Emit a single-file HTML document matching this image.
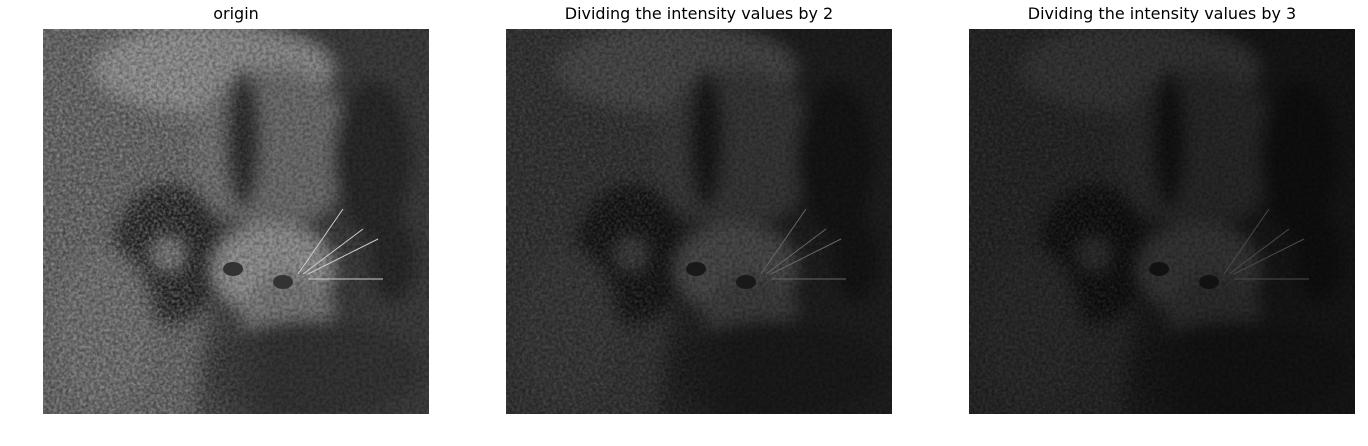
<!DOCTYPE html>
<html><head><meta charset="utf-8"><style>
html,body{margin:0;padding:0;background:#fff;width:1368px;height:446px;overflow:hidden}
.t{position:absolute;top:4px;font:16px "DejaVu Sans","Liberation Sans",sans-serif;color:#000;text-align:center;width:386px}
svg{position:absolute;top:29px}
</style></head><body>
<div class="t" style="left:43px">origin</div>
<div class="t" style="left:506px">Dividing the intensity values by 2</div>
<div class="t" style="left:969px">Dividing the intensity values by 3</div>
<svg width="0" height="0" style="position:absolute">
<defs>
<filter id="bl" x="-20%" y="-20%" width="140%" height="140%"><feGaussianBlur stdDeviation="8"/></filter>
<filter id="nz" x="0" y="0" width="100%" height="100%"><feTurbulence type="fractalNoise" baseFrequency="0.35" numOctaves="2" seed="3"/><feColorMatrix type="matrix" values="0 0 0 0 0.5  0 0 0 0 0.5  0 0 0 0 0.5  0 0 0 1.6 -0.5"/></filter>
<filter id="nz2" x="0" y="0" width="100%" height="100%"><feTurbulence type="fractalNoise" baseFrequency="0.3" numOctaves="2" seed="7"/><feColorMatrix type="matrix" values="0 0 0 0 0  0 0 0 0 0  0 0 0 0 0  0 0 0 1.8 -0.6"/></filter>
<linearGradient id="lg" x1="0" x2="1" y1="0" y2="0"><stop offset="0" stop-color="#fff"/><stop offset="0.35" stop-color="#fff"/><stop offset="0.6" stop-color="#000"/></linearGradient>
<mask id="mk"><rect width="386" height="385" fill="url(#lg)"/></mask>
<clipPath id="cp"><rect width="386" height="385"/></clipPath>
<g id="img" clip-path="url(#cp)">
<rect width="386" height="385" fill="#5e5e5e"/>
<g filter="url(#bl)">
<path d="M210 -20 L400 -20 L400 400 L150 400 L170 250 Z" fill="#3e3e3e"/>
<ellipse cx="170" cy="40" rx="120" ry="45" fill="#8a8a8a"/>
<ellipse cx="230" cy="120" rx="80" ry="80" fill="#6e6e6e"/>
<ellipse cx="200" cy="110" rx="18" ry="70" fill="#2a2a2a"/>
<ellipse cx="330" cy="130" rx="40" ry="80" fill="#2c2c2c"/>
<ellipse cx="125" cy="225" rx="55" ry="70" fill="#222"/>
<ellipse cx="125" cy="225" rx="15" ry="15" fill="#777"/>
<ellipse cx="230" cy="240" rx="60" ry="45" fill="#909090"/>
<ellipse cx="245" cy="285" rx="45" ry="40" fill="#7a7a7a"/>
<ellipse cx="270" cy="340" rx="110" ry="50" fill="#343434"/>
<ellipse cx="350" cy="230" rx="25" ry="45" fill="#2c2c2c"/>
<ellipse cx="60" cy="300" rx="50" ry="80" fill="#686868"/>
</g>
<rect x="0" y="0" width="386" height="385" filter="url(#nz)" opacity="0.55" mask="url(#mk)"/>
<rect x="0" y="0" width="386" height="385" filter="url(#nz2)" opacity="0.35"/>
<g stroke="#ccc" stroke-width="1" fill="none"><path d="M255 245 L300 180 M260 245 L320 200 M265 245 L335 210 M265 250 L340 250"/></g>
<ellipse cx="190" cy="240" rx="10" ry="7" fill="#333"/>
<ellipse cx="240" cy="253" rx="10" ry="7" fill="#333"/>
</g>
</defs></svg>
<svg width="386" height="385" style="left:43px"><use href="#img"/></svg>
<svg width="386" height="385" style="left:506px"><rect width="386" height="385" fill="#000"/><use href="#img" opacity="0.5"/></svg>
<svg width="386" height="385" style="left:969px"><rect width="386" height="385" fill="#000"/><use href="#img" opacity="0.36"/></svg>
</body></html>
